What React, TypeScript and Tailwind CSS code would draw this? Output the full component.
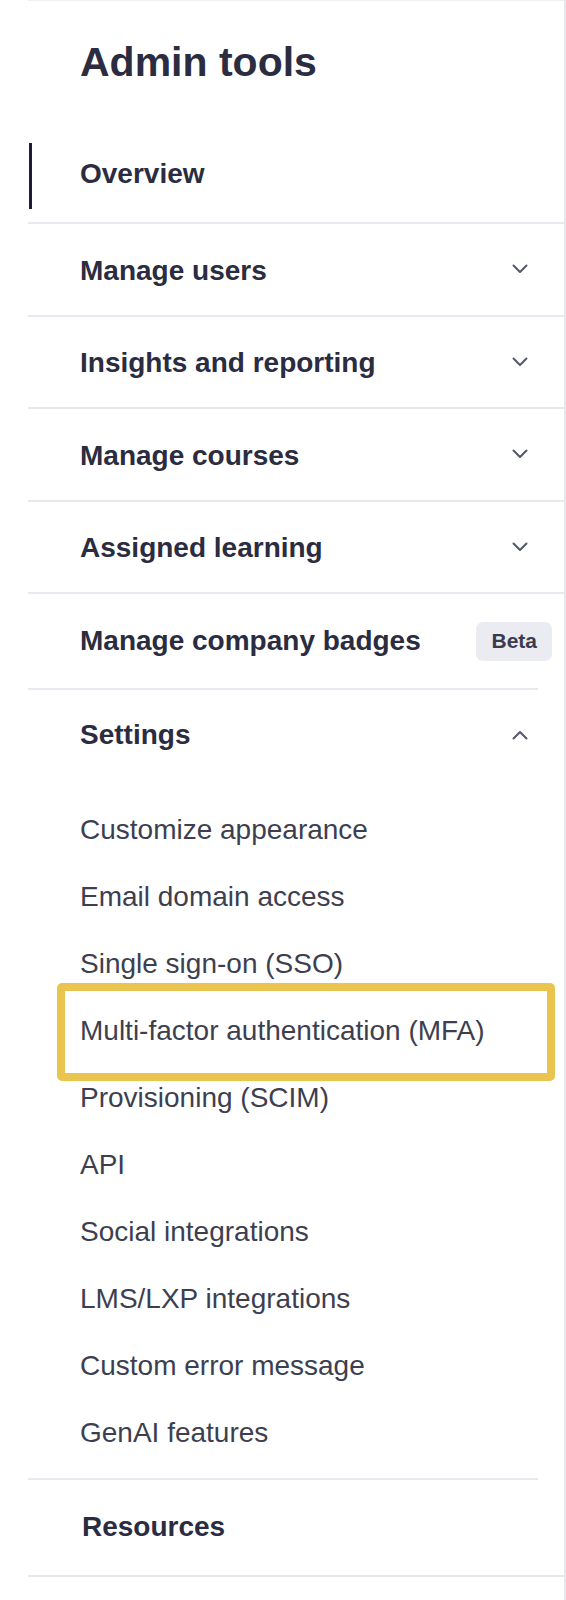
import React from "react";

const sections = [
  "Manage users",
  "Insights and reporting",
  "Manage courses",
  "Assigned learning",
];

const settingsItems = [
  "Customize appearance",
  "Email domain access",
  "Single sign-on (SSO)",
  "Multi-factor authentication (MFA)",
  "Provisioning (SCIM)",
  "API",
  "Social integrations",
  "LMS/LXP integrations",
  "Custom error message",
  "GenAI features",
];

function Chevron({ up = false }: { up?: boolean }) {
  return (
    <svg width="16" height="10" viewBox="0 0 16 10" fill="none" className="shrink-0">
      <path
        d={up ? "M1.5 8.5 L8 2 L14.5 8.5" : "M1.5 1.5 L8 8 L14.5 1.5"}
        stroke="#55576a"
        strokeWidth="2"
        strokeLinecap="round"
        strokeLinejoin="round"
      />
    </svg>
  );
}

export default function App() {
  return (
    <div className="w-[566px] min-h-[1600px] bg-white border-r-2 border-[#e6e6ed] font-['Liberation_Sans',Arial,sans-serif] text-[#2b2c3f]">
      <div className="h-px ml-[28px] bg-[#efeff3]" />

      {/* page title */}
      <h1 className="pt-[37px] pl-[80px] text-[41px] leading-[48px] font-bold">Admin tools</h1>

      <nav className="mt-[44px] ml-[28px]">
        {/* active item */}
        <div className="h-[94px] flex items-center border-b-2 border-[#e8e8ef]">
          <div className="h-[66px] ml-[1px] border-l-[3px] border-[#1d1e36] flex items-center pl-[48px]">
            <span className="text-[28px] leading-[32px] font-bold pb-[5px]">Overview</span>
          </div>
        </div>

        {sections.map((label) => (
          <div
            key={label}
            className="h-[92.5px] flex items-center justify-between pl-[52px] pr-[36px] border-b-2 border-[#e8e8ef]"
          >
            <span className="text-[28px] leading-[32px] font-bold pt-[3px]">{label}</span>
            <Chevron />
          </div>
        ))}

        <div className="h-[94px] flex items-center justify-between pl-[52px] pr-[12px]">
          <span className="text-[28px] leading-[32px] font-bold">Manage company badges</span>
          <span className="h-[39px] px-[15px] flex items-center rounded-[7px] bg-[#ebebf2] text-[21px] font-bold text-[#3a3c4e]">
            Beta
          </span>
        </div>
        <div className="h-[2px] mr-[26px] bg-[#e8e8ef]" />

        <div className="h-[90px] flex items-center justify-between pl-[52px] pr-[36px]">
          <span className="text-[28px] leading-[32px] font-bold">Settings</span>
          <Chevron up />
        </div>

        <ul className="pt-[16px] pb-[12px]">
          {settingsItems.map((item) => (
            <li key={item} className="relative h-[67px] flex items-center pl-[52px]">
              <span className="text-[28px] leading-[32px] text-[#3d3f51]">{item}</span>
              {item.startsWith("Multi-factor") && (
                <span className="absolute left-[29px] right-[9px] -top-[14px] -bottom-[17px] border-[8px] border-[#e9c44f] rounded-[5px]" />
              )}
            </li>
          ))}
        </ul>
        <div className="h-[2px] mr-[26px] bg-[#e8e8ef]" />

        <div className="h-[96.5px] flex items-center pl-[54px] border-b-2 border-[#e8e8ef]">
          <span className="text-[28px] leading-[32px] font-bold">Resources</span>
        </div>
      </nav>
    </div>
  );
}
